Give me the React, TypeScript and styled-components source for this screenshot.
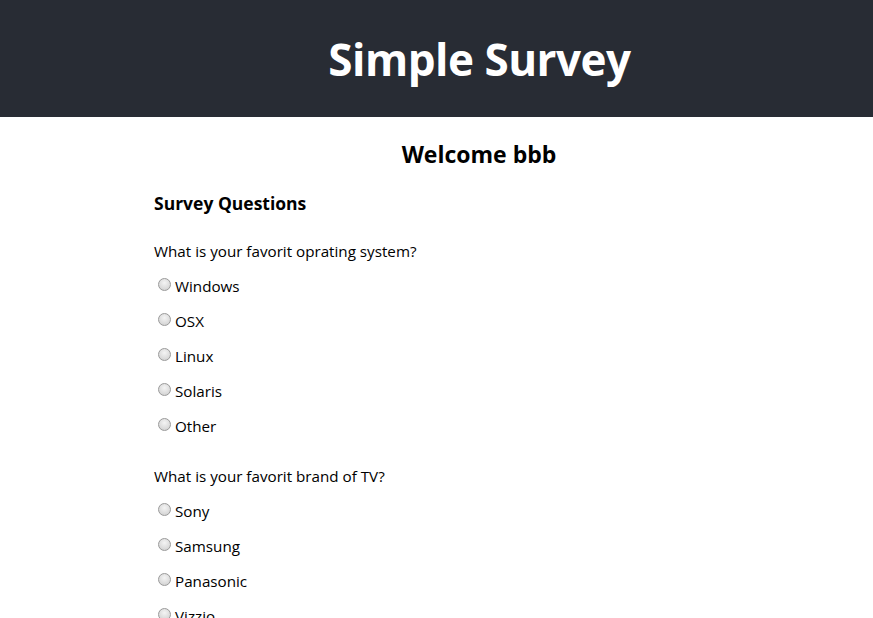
import React from "react";
import styled, { createGlobalStyle } from "styled-components";

const GlobalStyle = createGlobalStyle`
  body {
    margin: 0;
    font-family: "Open Sans", "Noto Sans", sans-serif;
    color: #000;
    background: #fff;
  }
`;

const Header = styled.header`
  background: #282c34;
  height: 117px;
  display: flex;
  align-items: center;
  justify-content: center;
  padding-left: 86px;
`;

const Title = styled.h1`
  margin: 0;
  color: #fff;
  font-size: 44px;
  font-weight: 700;
  letter-spacing: -0.5px;
`;

const Main = styled.main`
  width: 650px;
  margin-left: 154px;
`;

const Welcome = styled.h2`
  margin: 22px 0 0;
  text-align: center;
  font-size: 23px;
  line-height: 30px;
  font-weight: 700;
`;

const SectionTitle = styled.h3`
  margin: 21px 0 0;
  font-size: 17.5px;
  line-height: 26px;
  font-weight: 700;
`;

const QuestionList = styled.div`
  display: flex;
  flex-direction: column;
  gap: 26px;
  margin-top: 23px;
`;

const Prompt = styled.p`
  margin: 0;
  font-size: 15.2px;
  line-height: 24px;
`;

const Options = styled.div`
  display: flex;
  flex-direction: column;
  gap: 11px;
  margin-top: 11px;
`;

const Option = styled.label`
  display: flex;
  align-items: center;
  height: 24px;
  font-size: 15.2px;
  padding-left: 4px;
`;

const Radio = styled.input`
  appearance: none;
  width: 13px;
  height: 13px;
  margin: 0 4px 3px 0;
  border-radius: 50%;
  border: 1px solid #9a9a9a;
  background: radial-gradient(circle at 50% 35%, #f4f4f4 0%, #dcdcdc 60%, #cbcbcb 100%);
  box-sizing: border-box;
`;

const questions = [
  {
    id: "os",
    text: "What is your favorit oprating system?",
    options: ["Windows", "OSX", "Linux", "Solaris", "Other"],
  },
  {
    id: "tv",
    text: "What is your favorit brand of TV?",
    options: ["Sony", "Samsung", "Panasonic", "Vizzio", "Other"],
  },
];

const App = () => {
  return (
    <>
      <GlobalStyle />
      <Header>
        <Title>Simple Survey</Title>
      </Header>
      <Main>
        <Welcome>Welcome bbb</Welcome>
        <SectionTitle>Survey Questions</SectionTitle>
        <QuestionList>
          {questions.map((q) => (
            <div key={q.id}>
              <Prompt>{q.text}</Prompt>
              <Options>
                {q.options.map((o) => (
                  <Option key={o}>
                    <Radio type="radio" name={q.id} value={o} />
                    {o}
                  </Option>
                ))}
              </Options>
            </div>
          ))}
        </QuestionList>
      </Main>
    </>
  );
};

export default App;
